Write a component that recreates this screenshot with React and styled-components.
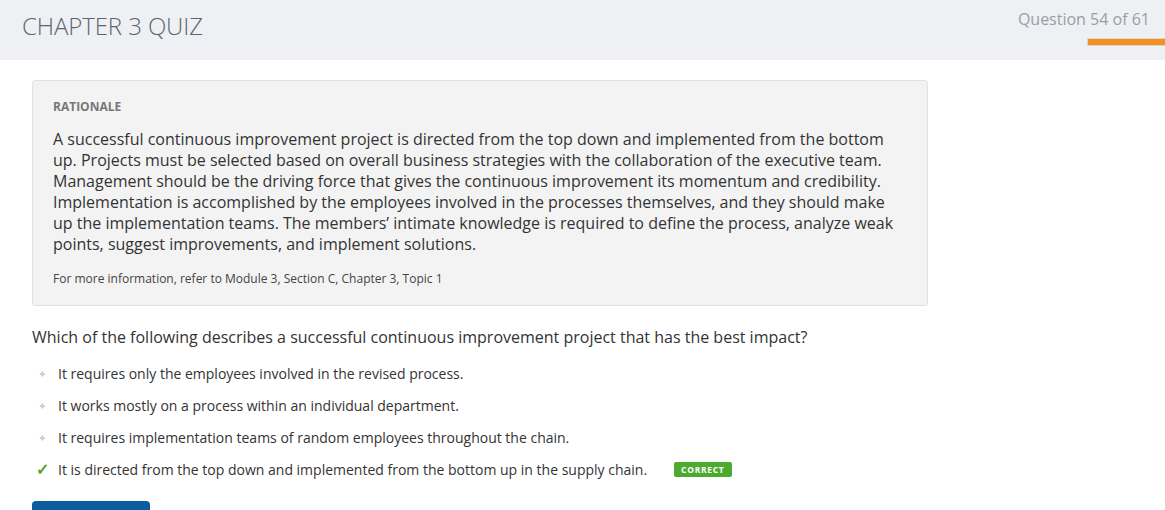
import React from 'react';
import styled, { createGlobalStyle } from 'styled-components';

const GlobalStyle = createGlobalStyle`
	body {
		margin: 0;
		background: #fff;
		font-family: 'Open Sans', 'Liberation Sans', sans-serif;
		color: #333;
	}
`;

const Header = styled.header`
	height: 60px;
	background: #eff0f4;
	display: flex;
	justify-content: space-between;
	align-items: flex-start;
	padding-left: 22px;
	box-sizing: border-box;
`;

const Title = styled.h1`
	margin: 0;
	padding-top: 9px;
	font-size: 24px;
	font-weight: 300;
	color: #5c6470;
	letter-spacing: -0.1px;
`;

const Progress = styled.div`
	display: flex;
	flex-direction: column;
	align-items: flex-end;
	padding-top: 9px;
`;

const Counter = styled.div`
	font-size: 16px;
	color: #9a9ea6;
	padding-right: 15px;
	line-height: 20px;
`;

const Bar = styled.div`
	margin-top: 9px;
	width: 78px;
	height: 8px;
	background: #f39021;
	border: 1px solid #d8d8d8;
	border-right: none;
	box-sizing: border-box;
`;

const Main = styled.main`
	padding: 20px 32px 0;
	width: 896px;
`;

const Rationale = styled.section`
	background: #f3f3f3;
	border: 1px solid #e2e2e2;
	border-radius: 3px;
	padding: 16px 20px 17px;
`;

const Label = styled.div`
	font-size: 12px;
	font-weight: 700;
	color: #777;
	line-height: 20px;
`;

const Paragraph = styled.p`
	margin: 12px 0 0;
	font-size: 16px;
	line-height: 21px;
	color: #333;
	padding-right: 10px;
`;

const Note = styled.p`
	margin: 15px 0 0;
	font-size: 12px;
	line-height: 18px;
	color: #444;
`;

const Question = styled.p`
	margin: 20px 0 0;
	font-size: 16px;
	line-height: 22px;
	color: #333;
`;

const Options = styled.ul`
	list-style: none;
	margin: 9px 0 0;
	padding: 0;
`;

const Option = styled.li`
	display: flex;
	align-items: center;
	height: 32px;
	font-size: 14px;
	color: #333;
`;

const Marker = styled.span`
	width: 26px;
	display: inline-flex;
	justify-content: center;
	padding-right: 6px;
	box-sizing: border-box;
	color: ${p => (p.$correct ? '#5aa22b' : '#b5b5b5')};
	font-size: ${p => (p.$correct ? '16px' : '8px')};
	font-weight: 700;
`;

const Badge = styled.span`
	margin-left: 27px;
	background: #4aab2e;
	color: #fff;
	font-size: 8.5px;
	font-weight: 700;
	letter-spacing: 0.7px;
	padding: 2px 7px;
	border-radius: 2px;
	line-height: 11px;
`;

const SubmitButton = styled.button`
	margin-top: 16px;
	width: 118px;
	height: 36px;
	border: none;
	border-radius: 4px 4px 0 0;
	background: #0b5d9e;
`;

const options = [
	{ text: 'It requires only the employees involved in the revised process.' },
	{ text: 'It works mostly on a process within an individual department.' },
	{ text: 'It requires implementation teams of random employees throughout the chain.' },
	{
		text: 'It is directed from the top down and implemented from the bottom up in the supply chain.',
		correct: true,
	},
];

const App = () => {
	return (
		<>
			<GlobalStyle />
			<Header>
				<Title>CHAPTER 3 QUIZ</Title>
				<Progress>
					<Counter>Question 54 of 61</Counter>
					<Bar />
				</Progress>
			</Header>
			<Main>
				<Rationale>
					<Label>RATIONALE</Label>
					<Paragraph>
						A successful continuous improvement project is directed from the top down and
						implemented from the bottom up. Projects must be selected based on overall business
						strategies with the collaboration of the executive team. Management should be the
						driving force that gives the continuous improvement its momentum and credibility.
						Implementation is accomplished by the employees involved in the processes
						themselves, and they should make up the implementation teams. The members’ intimate
						knowledge is required to define the process, analyze weak points, suggest
						improvements, and implement solutions.
					</Paragraph>
					<Note>For more information, refer to Module 3, Section C, Chapter 3, Topic 1</Note>
				</Rationale>
				<Question>
					Which of the following describes a successful continuous improvement project that has
					the best impact?
				</Question>
				<Options>
					{options.map(o => (
						<Option key={o.text}>
							<Marker $correct={o.correct}>{o.correct ? '✓' : '✧'}</Marker>
							{o.text}
							{o.correct && <Badge>CORRECT</Badge>}
						</Option>
					))}
				</Options>
				<SubmitButton />
			</Main>
		</>
	);
};

export default App;
